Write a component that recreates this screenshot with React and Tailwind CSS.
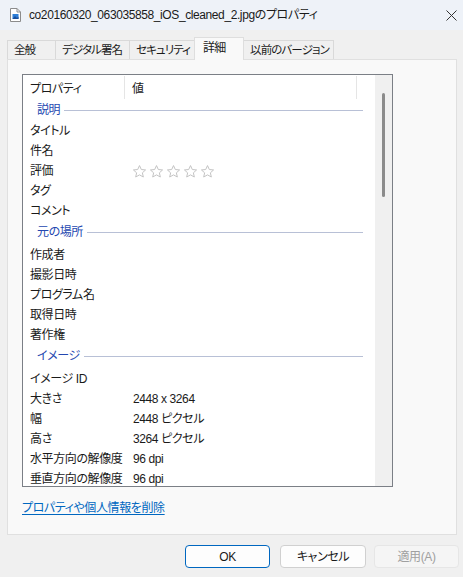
import React from "react";

const font =
	"font-['Liberation_Sans','Noto_Sans_CJK_JP',sans-serif] [font-feature-settings:'palt'] tracking-[-0.4px]";

const groups = [
	{
		name: "説明",
		h: "h-5",
		items: [["タイトル", ""], ["件名", ""], ["評価", "stars"], ["タグ", ""], ["コメント", ""]],
	},
	{
		name: "元の場所",
		h: "h-6",
		items: [["作成者", ""], ["撮影日時", ""], ["プログラム名", ""], ["取得日時", ""], ["著作権", ""]],
	},
	{
		name: "イメージ",
		h: "h-6",
		items: [
			["イメージ ID", ""],
			["大きさ", "2448 x 3264"],
			["幅", "2448 ピクセル"],
			["高さ", "3264 ピクセル"],
			["水平方向の解像度", "96 dpi"],
			["垂直方向の解像度", "96 dpi"],
		],
	},
];

const tabs = ["全般", "デジタル署名", "セキュリティ", "詳細", "以前のバージョン"];
const tabWidths = ["min-w-[49px]", "min-w-[75px]", "min-w-[64px]", "min-w-[50px]", "min-w-[87px]"];

const Star = () => (
	<svg width="15" height="15" viewBox="0 0 24 24" fill="none" stroke="#c4c4c4" strokeWidth="1.6" strokeLinejoin="round">
		<path d="M12 2.5l2.9 6.3 6.8.7-5.1 4.6 1.5 6.7L12 17.4l-6.1 3.4 1.5-6.7-5.1-4.6 6.8-.7z" />
	</svg>
);

const FileIcon = () => (
	<svg width="11" height="14" viewBox="0 0 11 14">
		<path d="M0.5 0.5h6.5l3.5 3.5v9.5h-10z" fill="#fff" stroke="#8c8c8c" />
		<path d="M7 0.5v3.5h3.5" fill="none" stroke="#8c8c8c" />
		<rect x="2.5" y="6" width="6" height="5" fill="#2f7fd8" />
		<path d="M2.5 11l2.5-3 2 2 1.5-1.5v2.5z" fill="#1a4f9c" />
	</svg>
);

const App = () => {
	return (
		<div className={`w-[463px] h-[577px] flex flex-col bg-[#f0f0f0] text-[12px] text-[#1a1a1a] ${font}`}>
			{/* title bar */}
			<div className="h-[30px] flex items-center bg-[#eef2f8] pl-[10px] pr-[6px]">
				<FileIcon />
				<span className="ml-[8px] flex-1 whitespace-nowrap">co20160320_063035858_iOS_cleaned_2.jpgのプロパティ</span>
				<svg width="11" height="11" viewBox="0 0 11 11" stroke="#333" strokeWidth="1">
					<path d="M0.5 0.5l10 10M10.5 0.5l-10 10" />
				</svg>
			</div>

			<div className="flex flex-col px-[6px] pt-[7px]">
				{/* tabs */}
				<div className="flex items-end h-[22px] ml-[1px] tracking-[-0.9px] text-[11.5px]">
					{tabs.map((t, i) =>
						i === 3 ? (
							<div
								key={t}
								className={`${tabWidths[i]} shrink-0 -ml-px h-[23px] -mb-px relative z-10 bg-[#f9f9f9] border border-b-0 border-[#dedede] pl-[8px] pr-[5px] pt-[1px] text-[12px] whitespace-nowrap`}
							>
								{t}
							</div>
						) : (
							<div
								key={t}
								className={`${tabWidths[i]} shrink-0 h-[19px] bg-[#f0f0f0] border border-b-0 border-[#d9d9d9] -ml-px first:ml-0 pl-[6px] pr-[4px] leading-[19px] whitespace-nowrap`}
							>
								{t}
							</div>
						)
					)}
				</div>

				{/* panel */}
				<div className="ml-[1px] w-[450px] h-[476px] bg-[#f9f9f9] border border-[#e0e0e0] pt-[14px] pl-[14px] flex flex-col">
					<div className="w-[371px] h-[413px] border border-[#7b7f86] bg-white flex overflow-hidden">
						<div className="w-[352px] flex flex-col">
							<div className="h-[25px] flex shrink-0">
								<div className="w-[102px] pl-[7px] leading-[26px] border-r border-[#e5e5e5] my-px">プロパティ</div>
								<div className="w-[232px] pl-[7px] leading-[26px] border-r border-[#e5e5e5] my-px">値</div>
							</div>
							{groups.map((g) => (
								<div key={g.name} className="flex flex-col">
									<div className={`${g.h} flex items-center pl-[14px] pr-[12px] shrink-0`}>
										<span className="text-[#2447b0] mr-[4px]">{g.name}</span>
										<div className="flex-1 h-px bg-[#b8c0d6]" />
									</div>
									{g.items.map(([k, v]) => (
										<div key={k} className="h-5 flex items-center pt-[2px] shrink-0">
											<div className="w-[102px] pl-[7px] whitespace-nowrap">{k}</div>
											<div className="pl-[8px] flex items-center">
												{v === "stars" ? (
													<div className="flex gap-[2px] -ml-[1px]">
														<Star />
														<Star />
														<Star />
														<Star />
														<Star />
													</div>
												) : (
													v
												)}
											</div>
										</div>
									))}
								</div>
							))}
						</div>
						<div className="w-[17px] bg-[#f0f0f0] flex flex-col">
							<div className="mt-[18px] ml-[7px] w-[3px] h-[104px] rounded-full bg-[#8b8b8b]" />
						</div>
					</div>
					<div className="mt-[12px]">
						<a href="#" className="text-[#0067c0] underline underline-offset-2">
							プロパティや個人情報を削除
						</a>
					</div>
				</div>
			</div>

			{/* buttons */}
			<div className="flex justify-end pr-[4px] mt-[10px]">
				<button className="w-[85px] h-[23px] rounded-[4px] border border-[#0067c0] bg-[#fdfdfd]">OK</button>
				<button className="ml-[10px] w-[86px] h-[23px] rounded-[4px] border border-[#d0d0d0] bg-[#fdfdfd]">キャンセル</button>
				<button className="ml-[8px] w-[85px] h-[23px] rounded-[4px] border border-[#e6e6e6] bg-[#f5f5f5] text-[#a0a0a0]">
					適用(A)
				</button>
			</div>
		</div>
	);
};

export default App;
